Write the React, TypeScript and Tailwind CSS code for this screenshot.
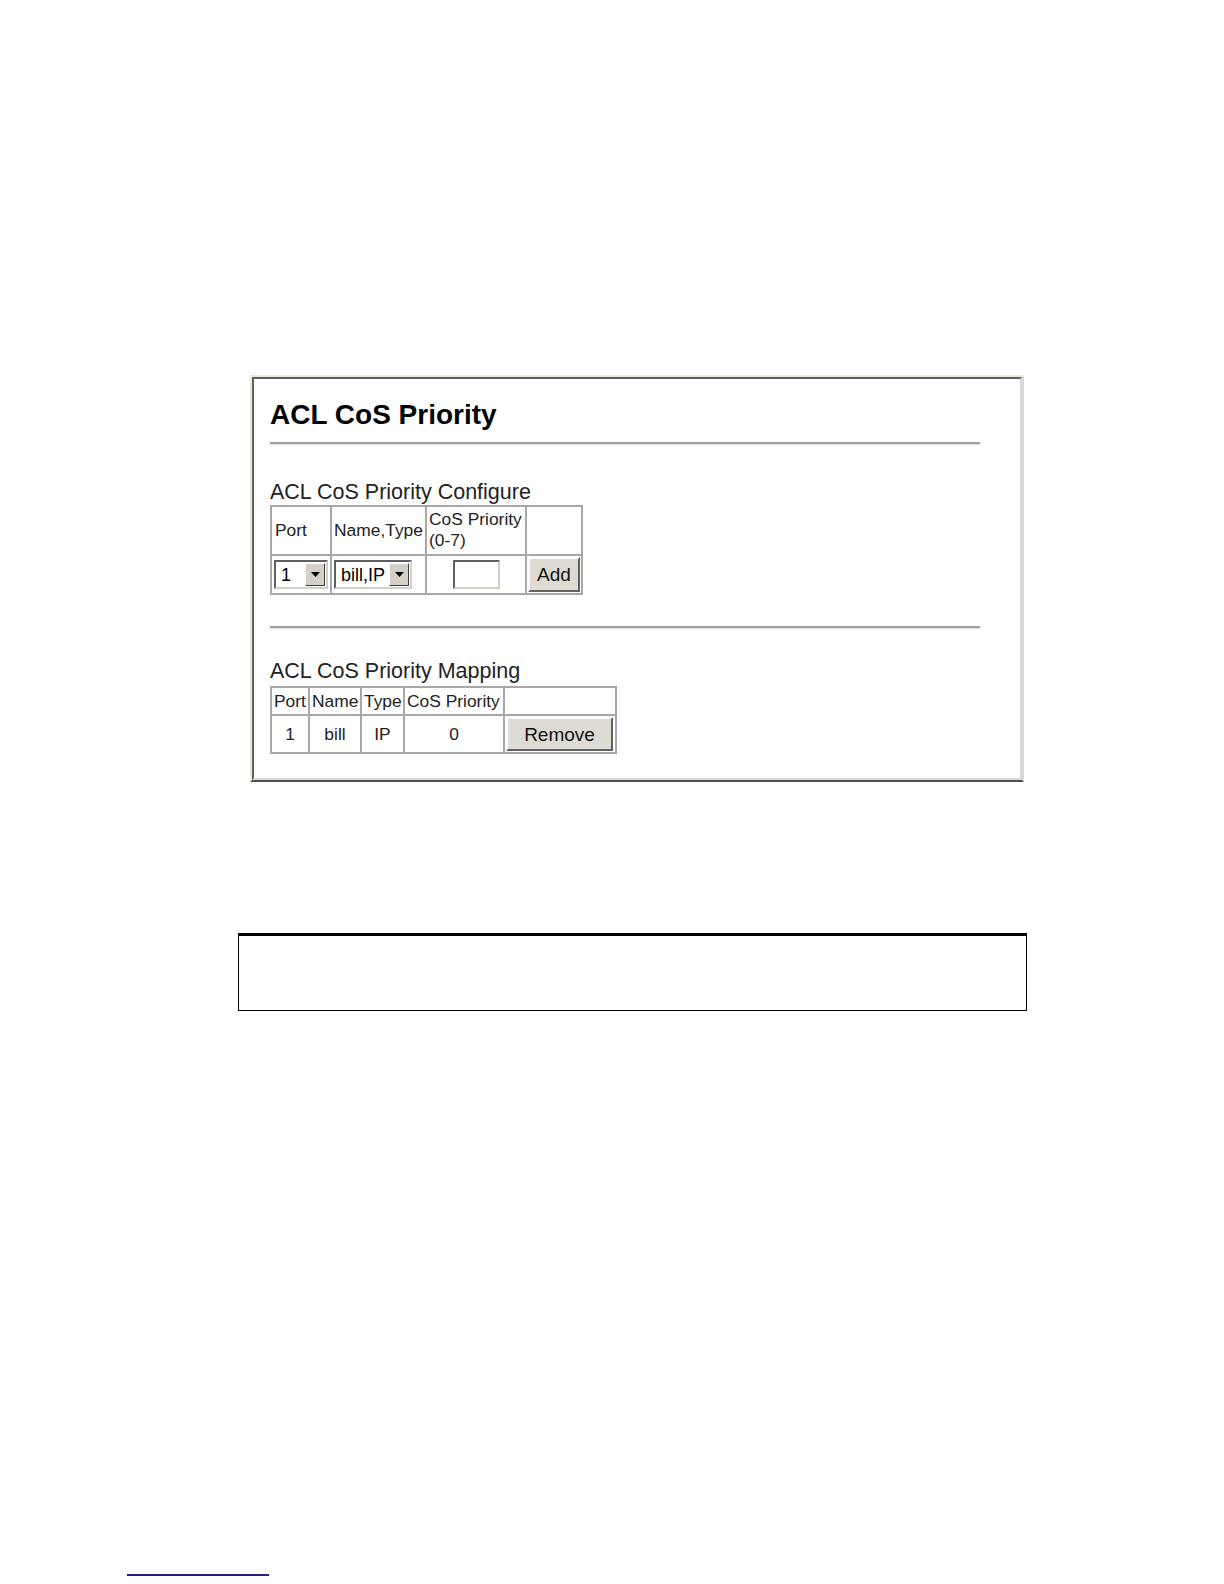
import React from 'react'

const font = { fontFamily: '"Liberation Sans", Arial, sans-serif' }

function Arrow() {
  return (
    <div className="flex h-full w-[20px] items-center justify-center border border-t-white border-l-white border-b-[#404040] border-r-[#404040] bg-[#d4d0c8]">
      <svg width="9" height="5" viewBox="0 0 9 5">
        <path d="M0 0 L9 0 L4.5 5 Z" fill="#000" />
      </svg>
    </div>
  )
}

function Select({ value, width }: { value: string; width: string }) {
  return (
    <div
      className={`flex h-[29px] ${width} items-stretch border-2 border-t-[#606060] border-l-[#606060] border-b-[#d4d0c8] border-r-[#d4d0c8] bg-white p-px`}
    >
      <span className="flex-1 pl-[4px] text-[18px] leading-[25px] text-black">{value}</span>
      <Arrow />
    </div>
  )
}

function Button({ label, className }: { label: string; className: string }) {
  return (
    <button
      className={`border-2 border-t-white border-l-white border-b-[#606060] border-r-[#606060] bg-[#dedbd3] text-[19px] text-[#111] ${className}`}
    >
      {label}
    </button>
  )
}

const cell = 'border-2 border-[#a8a8a8] p-0'

export default function App() {
  return (
    <div className="flex h-[1584px] w-[1224px] flex-col bg-white" style={font}>
      {/* Screenshot frame */}
      <div className="ml-[250px] mt-[375px] h-[407px] w-[774px] border-2 border-t-[#ecebd6] border-l-[#ecebd6] border-b-[#505050] border-r-[#d8d8d8]">
        <div className="h-full w-full border-2 border-t-[#606060] border-l-[#606060] border-b-[#d8d8d8] border-r-[#d8d8d8] bg-white pl-[16px] pt-[20px]">
          <h1 className="text-[28px] font-bold leading-[32px] text-black">ACL CoS Priority</h1>
          <div className="mt-[11px] h-[3px] w-[710px] border-t-2 border-[#a0a0a0] border-b border-b-[#e0e0e0]" />

          <p className="mt-[35px] text-[21.5px] leading-[24px] text-[#222]">ACL CoS Priority Configure</p>
          <table className="mt-[1px] border-collapse text-[17.4px] leading-[21px] text-[#222]">
            <tbody>
              <tr className="h-[49px]">
                <td className={`${cell} w-[60px] pl-[3px]`}>Port</td>
                <td className={`${cell} w-[95px] pl-[2px]`}>Name,Type</td>
                <td className={`${cell} w-[100px] pl-[2px] align-top pt-[2px]`}>
                  CoS Priority
                  <br />
                  (0-7)
                </td>
                <td className={`${cell} w-[56px]`} />
              </tr>
              <tr className="h-[39px]">
                <td className={`${cell} pl-[2px]`}>
                  <Select value="1" width="w-[54px]" />
                </td>
                <td className={`${cell} pl-[2px]`}>
                  <Select value="bill,IP" width="w-[78px]" />
                </td>
                <td className={cell}>
                  <div className="flex justify-center">
                    <div className="h-[29px] w-[47px] border-2 border-t-[#606060] border-l-[#606060] border-b-[#d4d0c8] border-r-[#d4d0c8] bg-white" />
                  </div>
                </td>
                <td className={`${cell} px-[1px]`}>
                  <Button label="Add" className="h-[35px] w-[52px]" />
                </td>
              </tr>
            </tbody>
          </table>

          <div className="mt-[31px] h-[3px] w-[710px] border-t-2 border-[#a0a0a0] border-b border-b-[#e0e0e0]" />

          <p className="mt-[30px] text-[21.5px] leading-[24px] text-[#222]">ACL CoS Priority Mapping</p>
          <table className="mt-[3px] border-collapse text-[17.4px] leading-[21px] text-[#222]">
            <tbody>
              <tr className="h-[28px]">
                <td className={`${cell} w-[38px] pl-[2px]`}>Port</td>
                <td className={`${cell} w-[52px] pl-[2px]`}>Name</td>
                <td className={`${cell} w-[43px] pl-[2px]`}>Type</td>
                <td className={`${cell} w-[100px] pl-[2px]`}>CoS Priority</td>
                <td className={`${cell} w-[112px]`} />
              </tr>
              <tr className="h-[38px]">
                <td className={`${cell} text-center`}>1</td>
                <td className={`${cell} text-center`}>bill</td>
                <td className={`${cell} text-center`}>IP</td>
                <td className={`${cell} text-center`}>0</td>
                <td className={`${cell} px-[1px]`}>
                  <Button label="Remove" className="h-[34px] w-[107px]" />
                </td>
              </tr>
            </tbody>
          </table>
        </div>
      </div>

      {/* Empty note box */}
      <div className="ml-[238px] mt-[151px] h-[78px] w-[789px] border border-t-[3px] border-black" />

      {/* Footnote rule */}
      <div className="ml-[127px] mt-auto mb-[8px] h-[2px] w-[142px] bg-[#20208a]" />
    </div>
  )
}
